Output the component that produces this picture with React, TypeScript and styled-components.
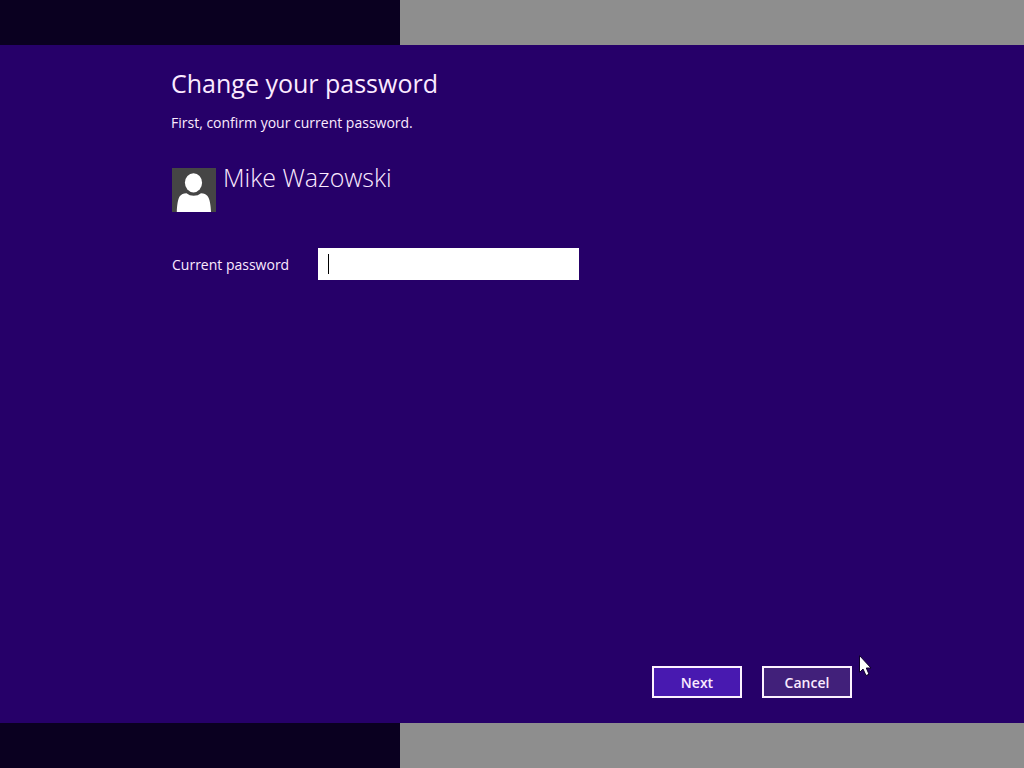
import React from "react";
import styled, { createGlobalStyle } from "styled-components";

const GlobalStyle = createGlobalStyle`
  *, *::before, *::after { box-sizing: border-box; }
  body {
    margin: 0;
    font-family: "Segoe UI", "Open Sans", "Noto Sans", sans-serif;
    color: #fbeaff;
  }
`;

const Screen = styled.div`
  min-height: 100vh;
  display: flex;
  flex-direction: column;
  background: linear-gradient(to right, #0a0020 400px, #8e8e8e 400px);
`;

const Dialog = styled.form`
  position: relative;
  flex: 1;
  margin: 45px 0;
  padding: 20px 172px 25px 171px;
  display: flex;
  flex-direction: column;
  background: #260069;
`;

const Title = styled.h1`
  margin: 0;
  font-size: 25px;
  line-height: 36px;
  font-weight: 400;
`;

const Hint = styled.p`
  margin: 12px 0 0;
  font-size: 14px;
  line-height: 20px;
`;

const Account = styled.div`
  display: flex;
  align-items: flex-start;
  gap: 7px;
  margin: 26px 0 0 1px;
`;

const Avatar = styled.svg`
  width: 44px;
  height: 44px;
  margin-top: 9px;
  flex: none;
`;

const AccountName = styled.h2`
  margin: 0;
  font-size: 25px;
  line-height: 36px;
  font-weight: 300;
`;

const Field = styled.div`
  display: flex;
  align-items: center;
  margin: 36px 0 0 1px;
`;

const FieldLabel = styled.label`
  width: 146px;
  padding-top: 2px;
  font-size: 14px;
  line-height: 20px;
`;

const InputWrap = styled.div`
  position: relative;
  width: 261px;
`;

const PasswordInput = styled.input`
  display: block;
  width: 100%;
  height: 32px;
  padding: 4px 10px;
  border: 0;
  outline: 0;
  background: #ffffff;
  color: #000000;
  caret-color: transparent;
  font: inherit;
  font-size: 14px;
`;

const Caret = styled.span`
  position: absolute;
  left: 10px;
  top: 6px;
  width: 1px;
  height: 20px;
  background: #000000;
`;

const Actions = styled.div`
  display: flex;
  justify-content: flex-end;
  gap: 20px;
  margin-top: auto;
`;

const ActionButton = styled.button<{ $primary?: boolean }>`
  width: 90px;
  height: 32px;
  padding: 2px 0 0;
  border: 2px solid #fdf2ff;
  background: ${(p) => (p.$primary ? "#4819b0" : "#41207a")};
  color: #fbeaff;
  font: inherit;
  font-size: 14px;
  line-height: 20px;
  font-weight: 600;
`;

const Pointer = styled.svg`
  position: absolute;
  right: 152px;
  bottom: 46px;
  width: 13px;
  height: 22px;
  pointer-events: none;
`;

export default function App() {
  return (
    <>
      <GlobalStyle />
      <Screen>
        <Dialog onSubmit={(e) => e.preventDefault()}>
          <Title>Change your password</Title>
          <Hint>First, confirm your current password.</Hint>
          <Account>
            <Avatar viewBox="0 0 44 44" aria-hidden="true">
              <rect width="44" height="44" fill="#454545" />
              <ellipse cx="21.5" cy="14.8" rx="8.6" ry="9.6" fill="#fff" />
              <path
                d="M4.8 44C5 37 6 30.500 8 28Q9.800 25.500 14.500 25.200Q17.500 27.800 21.700 27.800Q26 27.800 29 25.200Q33.600 25.500 35.500 28C37.800 31 38.700 37 39 44Z"
                fill="#fff"
              />
            </Avatar>
            <AccountName>Mike Wazowski</AccountName>
          </Account>
          <Field>
            <FieldLabel htmlFor="current-password">Current password</FieldLabel>
            <InputWrap>
              <PasswordInput id="current-password" type="password" />
              <Caret />
            </InputWrap>
          </Field>
          <Actions>
            <ActionButton type="submit" $primary>
              Next
            </ActionButton>
            <ActionButton type="button">Cancel</ActionButton>
          </Actions>
          <Pointer viewBox="0 0 13 22" aria-hidden="true">
            <path
              d="M0.500 0.500V17.500L4 14L7 20.500L10 19.300L7.300 13H12Z"
              fill="#fff"
              stroke="#10002c"
              strokeWidth="1"
            />
          </Pointer>
        </Dialog>
      </Screen>
    </>
  );
}
